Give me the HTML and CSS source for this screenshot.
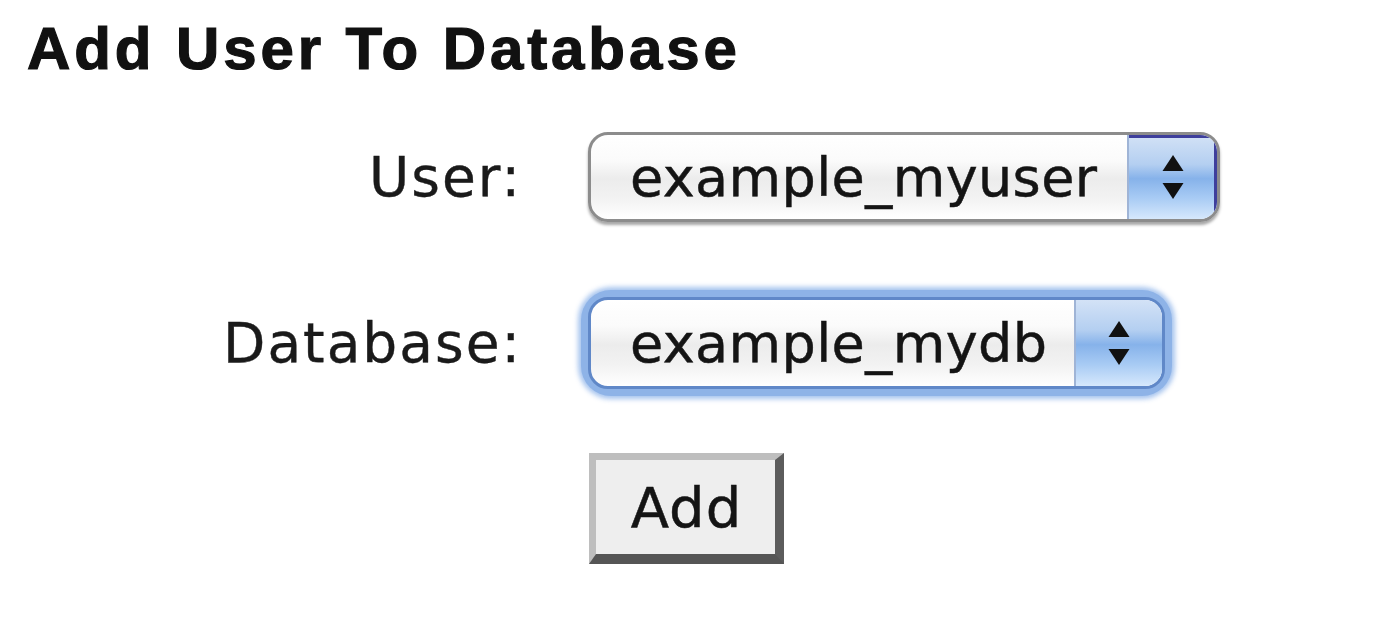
FILE: index.html
```html
<!DOCTYPE html>
<html>
<head>
<meta charset="utf-8">
<link rel="stylesheet" href="styles.css">
</head>
<body>
<h1 class="title">Add User To Database</h1>
<form class="form">
  <label class="label">User:</label>
  <div class="select select-user">
    <span class="select-text">example_myuser</span>
    <span class="select-arrows">
      <svg width="30" height="56" viewBox="0 0 30 56"><path d="M15 6 L25.5 22 L4.5 22 Z" fill="#111"/><path d="M4.5 34 L25.5 34 L15 50 Z" fill="#111"/></svg>
    </span>
  </div>
  <label class="label label-db">Database:</label>
  <div class="focus-ring">
    <div class="select select-db">
      <span class="select-text">example_mydb</span>
      <span class="select-arrows">
        <svg width="30" height="56" viewBox="0 0 30 56"><path d="M15 6 L25.5 22 L4.5 22 Z" fill="#111"/><path d="M4.5 34 L25.5 34 L15 50 Z" fill="#111"/></svg>
      </span>
    </div>
  </div>
  <span></span>
  <button type="button" class="add-btn">Add</button>
</form>
</body>
</html>
```
FILE: styles.css
```css
html, body {
  margin: 0;
  padding: 0;
  background: #ffffff;
}
body {
  width: 1388px;
  height: 619px;
  overflow: hidden;
  color: #141414;
}
.title {
  margin: 0;
  padding: 21px 0 0 27px;
  font-family: "Liberation Sans", Arial, sans-serif;
  font-weight: bold;
  font-size: 60px;
  line-height: 56px;
  letter-spacing: 3.9px;
  color: #111;
  -webkit-text-stroke: 1.2px #111;
}
.form {
  display: grid;
  grid-template-columns: 522px auto;
  column-gap: 66px;
  align-items: center;
  justify-items: start;
  margin-top: 55px;
}
.label {
  justify-self: end;
  font-family: "DejaVu Sans", Verdana, sans-serif;
  font-size: 55px;
  letter-spacing: 2px;
  color: #1a1a1a;
  -webkit-text-stroke: 0.4px #1a1a1a;
}
.label-db {
  margin-top: 68px;
}
.select {
  box-sizing: border-box;
  display: flex;
  align-items: stretch;
  height: 90px;
  border: 3px solid #8c8c8c;
  border-radius: 20px;
  overflow: hidden;
  background: linear-gradient(to bottom, #ffffff 0%, #fbfbfb 30%, #ececec 52%, #f2f2f2 75%, #ffffff 100%);
  box-shadow: 0 3px 3px rgba(0,0,0,0.35);
}
.select-user {
  width: 632px;
}
.select-text {
  flex: 1;
  display: flex;
  align-items: center;
  padding-left: 39px;
  font-family: "DejaVu Sans", Verdana, sans-serif;
  font-size: 54px;
  color: #141414;
  letter-spacing: 0.4px;
  -webkit-text-stroke: 0.5px #141414;
}
.select-arrows {
  width: 88px;
  display: flex;
  align-items: center;
  justify-content: center;
  border-left: 2px solid #9fb4d6;
  background: linear-gradient(to bottom, #d3e2f6 0%, #b4cff1 35%, #86b2ea 52%, #a8cbf4 75%, #d6e8fc 100%);
}
.select-user .select-arrows {
  box-shadow: inset -3px 3px 0 #3e3f9c;
}
.focus-ring {
  margin-top: 68px;
  padding: 7px;
  margin-left: -7px;
  border-radius: 30px;
  background: #8eb3e7;
  box-shadow: 0 0 5px 3px rgba(150,186,235,0.85);
}
.select-db {
  width: 577px;
  height: 92px;
  border-color: #6088c8;
  box-shadow: none;
}
.select-db .select-arrows {
  width: 86px;
}
.add-btn {
  margin-top: 57px;
  margin-left: 1px;
  width: 195px;
  height: 111px;
  box-sizing: border-box;
  border-style: solid;
  border-width: 7px 9px 10px 7px;
  border-color: #bebebe #5c5c5c #555555 #bebebe;
  background: #eeeeee;
  font-family: "DejaVu Sans", Verdana, sans-serif;
  font-size: 56px;
  color: #141414;
  padding: 0 0 0 2px;
  letter-spacing: 1px;
  -webkit-text-stroke: 0.5px #141414;
}
```
